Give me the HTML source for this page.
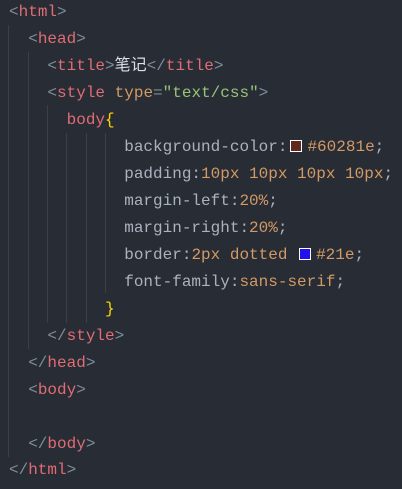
<!DOCTYPE html>
<html><head><meta charset="utf-8"><style>
html,body{margin:0;padding:0}
body{width:402px;height:489px;background:#282c34;position:relative;overflow:hidden;font-family:"Liberation Mono","Noto Sans CJK SC",monospace;font-size:16px}
.l{position:absolute;left:9px;height:27px;line-height:27px;white-space:pre;color:#abb2bf}
.g{position:absolute;width:1px;background:#3b4048}
.p{color:#7f8c98}.t{color:#e06c75}.a{color:#d19a66}.s{color:#98c379}.v{color:#d19a66}.b{color:#ffd700}.w{color:#dcdfe4}
.sw{display:inline-block;width:10px;height:10px;border:1px solid #fff;vertical-align:-1px;margin:0 5px 0 3px}
</style></head><body>
<div class="g" style="left:8px;top:25px;height:432px"></div>
<div class="g" style="left:28px;top:52px;height:297px"></div>
<div class="g" style="left:47px;top:105px;height:218px"></div>
<div class="g" style="left:66px;top:133px;height:190px"></div>
<div class="g" style="left:86px;top:133px;height:190px"></div>
<div class="g" style="left:105px;top:133px;height:160px"></div>

<div class="l" style="top:-1px"><span class="p">&lt;</span><span class="t">html</span><span class="p">&gt;</span></div>
<div class="l" style="top:26px">  <span class="p">&lt;</span><span class="t">head</span><span class="p">&gt;</span></div>
<div class="l" style="top:53px">    <span class="p">&lt;</span><span class="t">title</span><span class="p">&gt;</span><span class="w">笔记</span><span class="p">&lt;/</span><span class="t">title</span><span class="p">&gt;</span></div>
<div class="l" style="top:80px">    <span class="p">&lt;</span><span class="t">style</span> <span class="a">type</span><span class="p">=</span><span class="s">"text/css"</span><span class="p">&gt;</span></div>
<div class="l" style="top:107px">      <span class="t">body</span><span class="b">{</span></div>
<div class="l" style="top:134px">            background-color:<span class="sw" style="background:#60281e"></span><span class="v">#60281e</span>;</div>
<div class="l" style="top:161px">            padding:<span class="v">10px 10px 10px 10px</span>;</div>
<div class="l" style="top:188px">            margin-left:<span class="v">20%</span>;</div>
<div class="l" style="top:215px">            margin-right:<span class="v">20%</span>;</div>
<div class="l" style="top:242px">            border:<span class="v">2px dotted </span><span class="sw" style="background:#2211ee;margin-left:2px"></span><span class="v">#21e</span>;</div>
<div class="l" style="top:269px">            font-family:<span class="v">sans-serif</span>;</div>
<div class="l" style="top:296px">          <span class="b">}</span></div>
<div class="l" style="top:323px">    <span class="p">&lt;/</span><span class="t">style</span><span class="p">&gt;</span></div>
<div class="l" style="top:350px">  <span class="p">&lt;/</span><span class="t">head</span><span class="p">&gt;</span></div>
<div class="l" style="top:377px">  <span class="p">&lt;</span><span class="t">body</span><span class="p">&gt;</span></div>
<div class="l" style="top:431px">  <span class="p">&lt;/</span><span class="t">body</span><span class="p">&gt;</span></div>
<div class="l" style="top:457px"><span class="p">&lt;/</span><span class="t">html</span><span class="p">&gt;</span></div>
</body></html>
